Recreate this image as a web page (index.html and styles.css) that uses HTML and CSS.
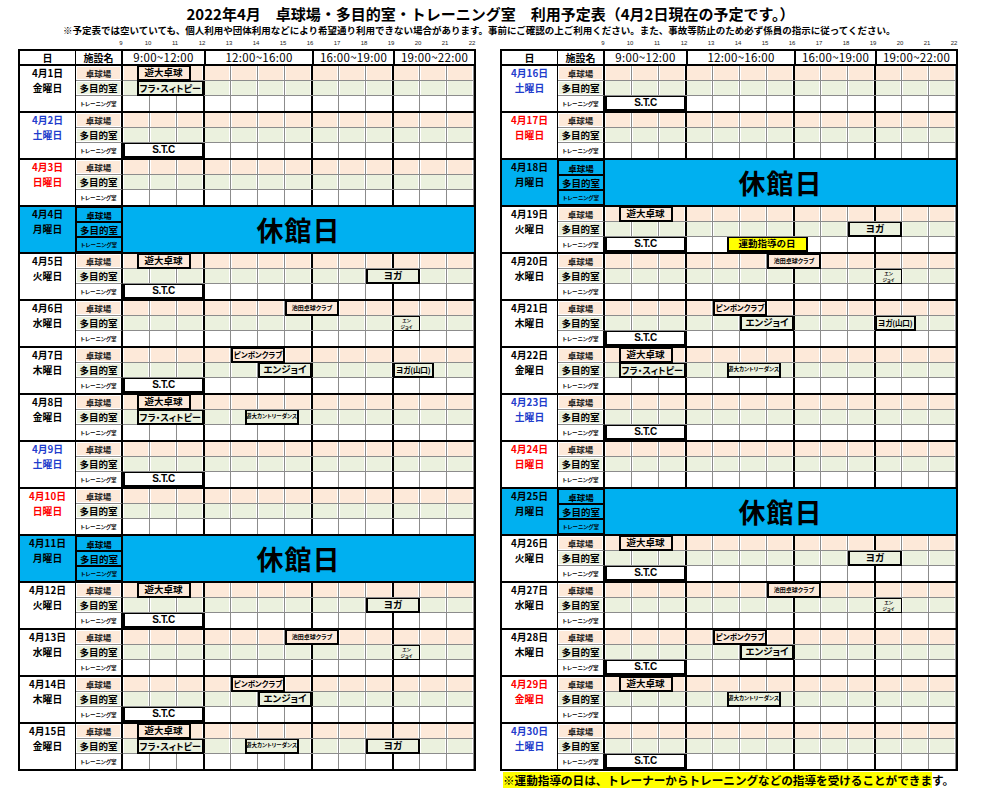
FILE: index.html
```html
<!DOCTYPE html>
<html lang="ja">
<head>
<meta charset="utf-8">
<title>2022年4月 利用予定表</title>
<link rel="stylesheet" href="styles.css">
</head>
<body>
<h1 class="title">2022年4月　卓球場・多目的室・トレーニング室　利用予定表（4月2日現在の予定です。）</h1>
<p class="subtitle">※予定表では空いていても、個人利用や団体利用などにより希望通り利用できない場合があります。事前にご確認の上ご利用ください。また、事故等防止のため必ず係員の指示に従ってください。</p>
<div class="tables">
  <div class="col">
    <div class="hours"><span>9</span><span>10</span><span>11</span><span>12</span><span>13</span><span>14</span><span>15</span><span>16</span><span>17</span><span>18</span><span>19</span><span>20</span><span>21</span><span>22</span></div>
    <div class="sched">
      <div class="head">
        <div class="h-date">日</div>
        <div class="h-fac">施設名</div>
        <div class="h-p">9:00~12:00</div>
        <div class="h-p">12:00~16:00</div>
        <div class="h-p">16:00~19:00</div>
        <div class="h-p">19:00~22:00</div>
      </div>

      <div class="day">
        <div class="date"><span>4月1日</span><span>金曜日</span></div>
        <div class="fac fac1">卓球場</div><div class="fac fac2">多目的室</div><div class="fac fac3">トレーニング室</div>
        <div class="row row1"></div><div class="row row2"></div><div class="row row3"></div>
        <div class="ev e-yudai">遊大卓球</div>
        <div class="ev e-hula">フラ・スィトピー</div>
      </div>

      <div class="day">
        <div class="date sat"><span>4月2日</span><span>土曜日</span></div>
        <div class="fac fac1">卓球場</div><div class="fac fac2">多目的室</div><div class="fac fac3">トレーニング室</div>
        <div class="row row1"></div><div class="row row2"></div><div class="row row3"></div>
        <div class="ev e-stc">S.T.C</div>
      </div>

      <div class="day">
        <div class="date sun"><span>4月3日</span><span>日曜日</span></div>
        <div class="fac fac1">卓球場</div><div class="fac fac2">多目的室</div><div class="fac fac3">トレーニング室</div>
        <div class="row row1"></div><div class="row row2"></div><div class="row row3"></div>
      </div>

      <div class="day closed">
        <div class="date"><span>4月4日</span><span>月曜日</span></div>
        <div class="fac fac1">卓球場</div><div class="fac fac2">多目的室</div><div class="fac fac3">トレーニング室</div>
        <div class="closed-label">休館日</div>
      </div>

      <div class="day">
        <div class="date"><span>4月5日</span><span>火曜日</span></div>
        <div class="fac fac1">卓球場</div><div class="fac fac2">多目的室</div><div class="fac fac3">トレーニング室</div>
        <div class="row row1"></div><div class="row row2"></div><div class="row row3"></div>
        <div class="ev e-yudai">遊大卓球</div>
        <div class="ev e-yoga">ヨガ</div>
        <div class="ev e-stc">S.T.C</div>
      </div>

      <div class="day">
        <div class="date"><span>4月6日</span><span>水曜日</span></div>
        <div class="fac fac1">卓球場</div><div class="fac fac2">多目的室</div><div class="fac fac3">トレーニング室</div>
        <div class="row row1"></div><div class="row row2"></div><div class="row row3"></div>
        <div class="ev e-ikeda">池田卓球クラブ</div>
        <div class="ev e-enjoy2"><span>エン</span><span>ジョイ</span></div>
      </div>

      <div class="day">
        <div class="date"><span>4月7日</span><span>木曜日</span></div>
        <div class="fac fac1">卓球場</div><div class="fac fac2">多目的室</div><div class="fac fac3">トレーニング室</div>
        <div class="row row1"></div><div class="row row2"></div><div class="row row3"></div>
        <div class="ev e-ping">ピンポンクラブ</div>
        <div class="ev e-enjoy">エンジョイ</div>
        <div class="ev e-yama">ヨガ(山口)</div>
        <div class="ev e-stc">S.T.C</div>
      </div>

      <div class="day">
        <div class="date"><span>4月8日</span><span>金曜日</span></div>
        <div class="fac fac1">卓球場</div><div class="fac fac2">多目的室</div><div class="fac fac3">トレーニング室</div>
        <div class="row row1"></div><div class="row row2"></div><div class="row row3"></div>
        <div class="ev e-yudai">遊大卓球</div>
        <div class="ev e-hula">フラ・スィトピー</div>
        <div class="ev e-country">遊大カントリーダンス</div>
      </div>

      <div class="day">
        <div class="date sat"><span>4月9日</span><span>土曜日</span></div>
        <div class="fac fac1">卓球場</div><div class="fac fac2">多目的室</div><div class="fac fac3">トレーニング室</div>
        <div class="row row1"></div><div class="row row2"></div><div class="row row3"></div>
        <div class="ev e-stc">S.T.C</div>
      </div>

      <div class="day">
        <div class="date sun"><span>4月10日</span><span>日曜日</span></div>
        <div class="fac fac1">卓球場</div><div class="fac fac2">多目的室</div><div class="fac fac3">トレーニング室</div>
        <div class="row row1"></div><div class="row row2"></div><div class="row row3"></div>
      </div>

      <div class="day closed">
        <div class="date"><span>4月11日</span><span>月曜日</span></div>
        <div class="fac fac1">卓球場</div><div class="fac fac2">多目的室</div><div class="fac fac3">トレーニング室</div>
        <div class="closed-label">休館日</div>
      </div>

      <div class="day">
        <div class="date"><span>4月12日</span><span>火曜日</span></div>
        <div class="fac fac1">卓球場</div><div class="fac fac2">多目的室</div><div class="fac fac3">トレーニング室</div>
        <div class="row row1"></div><div class="row row2"></div><div class="row row3"></div>
        <div class="ev e-yudai">遊大卓球</div>
        <div class="ev e-yoga">ヨガ</div>
        <div class="ev e-stc">S.T.C</div>
      </div>

      <div class="day">
        <div class="date"><span>4月13日</span><span>水曜日</span></div>
        <div class="fac fac1">卓球場</div><div class="fac fac2">多目的室</div><div class="fac fac3">トレーニング室</div>
        <div class="row row1"></div><div class="row row2"></div><div class="row row3"></div>
        <div class="ev e-ikeda">池田卓球クラブ</div>
        <div class="ev e-enjoy2"><span>エン</span><span>ジョイ</span></div>
      </div>

      <div class="day">
        <div class="date"><span>4月14日</span><span>木曜日</span></div>
        <div class="fac fac1">卓球場</div><div class="fac fac2">多目的室</div><div class="fac fac3">トレーニング室</div>
        <div class="row row1"></div><div class="row row2"></div><div class="row row3"></div>
        <div class="ev e-ping">ピンポンクラブ</div>
        <div class="ev e-enjoy">エンジョイ</div>
        <div class="ev e-stc">S.T.C</div>
      </div>

      <div class="day">
        <div class="date"><span>4月15日</span><span>金曜日</span></div>
        <div class="fac fac1">卓球場</div><div class="fac fac2">多目的室</div><div class="fac fac3">トレーニング室</div>
        <div class="row row1"></div><div class="row row2"></div><div class="row row3"></div>
        <div class="ev e-yudai">遊大卓球</div>
        <div class="ev e-hula">フラ・スィトピー</div>
        <div class="ev e-country">遊大カントリーダンス</div>
        <div class="ev e-yoga">ヨガ</div>
      </div>
    </div>
  </div>

  <div class="col col-r">
    <div class="hours"><span>9</span><span>10</span><span>11</span><span>12</span><span>13</span><span>14</span><span>15</span><span>16</span><span>17</span><span>18</span><span>19</span><span>20</span><span>21</span><span>22</span></div>
    <div class="sched">
      <div class="head">
        <div class="h-date">日</div>
        <div class="h-fac">施設名</div>
        <div class="h-p">9:00~12:00</div>
        <div class="h-p">12:00~16:00</div>
        <div class="h-p">16:00~19:00</div>
        <div class="h-p">19:00~22:00</div>
      </div>

      <div class="day">
        <div class="date sat"><span>4月16日</span><span>土曜日</span></div>
        <div class="fac fac1">卓球場</div><div class="fac fac2">多目的室</div><div class="fac fac3">トレーニング室</div>
        <div class="row row1"></div><div class="row row2"></div><div class="row row3"></div>
        <div class="ev e-stc">S.T.C</div>
      </div>

      <div class="day">
        <div class="date sun"><span>4月17日</span><span>日曜日</span></div>
        <div class="fac fac1">卓球場</div><div class="fac fac2">多目的室</div><div class="fac fac3">トレーニング室</div>
        <div class="row row1"></div><div class="row row2"></div><div class="row row3"></div>
      </div>

      <div class="day closed">
        <div class="date"><span>4月18日</span><span>月曜日</span></div>
        <div class="fac fac1">卓球場</div><div class="fac fac2">多目的室</div><div class="fac fac3">トレーニング室</div>
        <div class="closed-label">休館日</div>
      </div>

      <div class="day">
        <div class="date"><span>4月19日</span><span>火曜日</span></div>
        <div class="fac fac1">卓球場</div><div class="fac fac2">多目的室</div><div class="fac fac3">トレーニング室</div>
        <div class="row row1"></div><div class="row row2"></div><div class="row row3"></div>
        <div class="ev e-yudai">遊大卓球</div>
        <div class="ev e-yoga">ヨガ</div>
        <div class="ev e-stc">S.T.C</div>
        <div class="ev e-undo">運動指導の日</div>
      </div>

      <div class="day">
        <div class="date"><span>4月20日</span><span>水曜日</span></div>
        <div class="fac fac1">卓球場</div><div class="fac fac2">多目的室</div><div class="fac fac3">トレーニング室</div>
        <div class="row row1"></div><div class="row row2"></div><div class="row row3"></div>
        <div class="ev e-ikeda">池田卓球クラブ</div>
        <div class="ev e-enjoy2"><span>エン</span><span>ジョイ</span></div>
      </div>

      <div class="day">
        <div class="date"><span>4月21日</span><span>木曜日</span></div>
        <div class="fac fac1">卓球場</div><div class="fac fac2">多目的室</div><div class="fac fac3">トレーニング室</div>
        <div class="row row1"></div><div class="row row2"></div><div class="row row3"></div>
        <div class="ev e-ping">ピンポンクラブ</div>
        <div class="ev e-enjoy">エンジョイ</div>
        <div class="ev e-yama">ヨガ(山口)</div>
        <div class="ev e-stc">S.T.C</div>
      </div>

      <div class="day">
        <div class="date"><span>4月22日</span><span>金曜日</span></div>
        <div class="fac fac1">卓球場</div><div class="fac fac2">多目的室</div><div class="fac fac3">トレーニング室</div>
        <div class="row row1"></div><div class="row row2"></div><div class="row row3"></div>
        <div class="ev e-yudai">遊大卓球</div>
        <div class="ev e-hula">フラ・スィトピー</div>
        <div class="ev e-country">遊大カントリーダンス</div>
      </div>

      <div class="day">
        <div class="date sat"><span>4月23日</span><span>土曜日</span></div>
        <div class="fac fac1">卓球場</div><div class="fac fac2">多目的室</div><div class="fac fac3">トレーニング室</div>
        <div class="row row1"></div><div class="row row2"></div><div class="row row3"></div>
        <div class="ev e-stc">S.T.C</div>
      </div>

      <div class="day">
        <div class="date sun"><span>4月24日</span><span>日曜日</span></div>
        <div class="fac fac1">卓球場</div><div class="fac fac2">多目的室</div><div class="fac fac3">トレーニング室</div>
        <div class="row row1"></div><div class="row row2"></div><div class="row row3"></div>
      </div>

      <div class="day closed">
        <div class="date"><span>4月25日</span><span>月曜日</span></div>
        <div class="fac fac1">卓球場</div><div class="fac fac2">多目的室</div><div class="fac fac3">トレーニング室</div>
        <div class="closed-label">休館日</div>
      </div>

      <div class="day">
        <div class="date"><span>4月26日</span><span>火曜日</span></div>
        <div class="fac fac1">卓球場</div><div class="fac fac2">多目的室</div><div class="fac fac3">トレーニング室</div>
        <div class="row row1"></div><div class="row row2"></div><div class="row row3"></div>
        <div class="ev e-yudai">遊大卓球</div>
        <div class="ev e-yoga">ヨガ</div>
        <div class="ev e-stc">S.T.C</div>
      </div>

      <div class="day">
        <div class="date"><span>4月27日</span><span>水曜日</span></div>
        <div class="fac fac1">卓球場</div><div class="fac fac2">多目的室</div><div class="fac fac3">トレーニング室</div>
        <div class="row row1"></div><div class="row row2"></div><div class="row row3"></div>
        <div class="ev e-ikeda">池田卓球クラブ</div>
        <div class="ev e-enjoy2"><span>エン</span><span>ジョイ</span></div>
      </div>

      <div class="day">
        <div class="date"><span>4月28日</span><span>木曜日</span></div>
        <div class="fac fac1">卓球場</div><div class="fac fac2">多目的室</div><div class="fac fac3">トレーニング室</div>
        <div class="row row1"></div><div class="row row2"></div><div class="row row3"></div>
        <div class="ev e-ping">ピンポンクラブ</div>
        <div class="ev e-enjoy">エンジョイ</div>
        <div class="ev e-stc">S.T.C</div>
      </div>

      <div class="day">
        <div class="date sun"><span>4月29日</span><span>金曜日</span></div>
        <div class="fac fac1">卓球場</div><div class="fac fac2">多目的室</div><div class="fac fac3">トレーニング室</div>
        <div class="row row1"></div><div class="row row2"></div><div class="row row3"></div>
        <div class="ev e-yudai">遊大卓球</div>
        <div class="ev e-country">遊大カントリーダンス</div>
      </div>

      <div class="day">
        <div class="date sat"><span>4月30日</span><span>土曜日</span></div>
        <div class="fac fac1">卓球場</div><div class="fac fac2">多目的室</div><div class="fac fac3">トレーニング室</div>
        <div class="row row1"></div><div class="row row2"></div><div class="row row3"></div>
        <div class="ev e-stc">S.T.C</div>
      </div>
    </div>
    <p class="note"><span class="hl">※運動指導の日は、トレーナーからトレーニングなどの指導を受けることができま</span>す。</p>
  </div>
</div>
</body>
</html>
```

FILE: styles.css
```css
* { box-sizing: border-box; }

:root {
  --peach: #fde9d9;
  --green: #ebf1de;
  --grid: #8c8c8c;
  --periods:
    linear-gradient(#000, #000) 80px 0 / 2px 100% no-repeat,
    linear-gradient(#000, #000) 188px 0 / 2px 100% no-repeat,
    linear-gradient(#000, #000) 269px 0 / 2px 100% no-repeat;
  --tile-color: linear-gradient(to right, #fff 0 1px, transparent 1px 25px, #fff 25px 26px, var(--grid) 26px 27px) 0 0 / 27px 100% repeat-x;
  --tile-white: linear-gradient(to right, transparent 0 26px, var(--grid) 26px 27px) 0 0 / 27px 100% repeat-x;
}

body {
  margin: 0;
  width: 981px;
  height: 795px;
  overflow: hidden;
  background: #fff;
  color: #000;
  font-family: "Noto Sans CJK JP", "Noto Sans", sans-serif;
}

.title {
  margin: 5px 0 0;
  height: 18px;
  line-height: 18px;
  font-size: 15px;
  font-weight: 700;
  text-align: center;
  white-space: nowrap;
}

.subtitle {
  margin: 1px 0 0;
  padding-left: 63px;
  height: 12px;
  line-height: 12px;
  font-size: 9.5px;
  font-weight: 700;
  white-space: nowrap;
}

.tables {
  display: flex;
  gap: 24px;
  padding-left: 18px;
  margin-top: 2px;
}

.col {
  width: 458px;
}

.hours {
  display: flex;
  height: 11px;
  padding-left: 89.5px;
  font-family: "Liberation Sans", sans-serif;
  font-size: 6px;
  line-height: 11px;
  color: #222;
}

.hours span {
  flex: 0 0 27px;
  text-align: center;
}

.sched {
  border: 2px solid #000;
}

.head {
  display: grid;
  grid-template-columns: 56px 47px 81px 108px 81px 81px;
  height: 13px;
  line-height: 13px;
  text-align: center;
  white-space: nowrap;
}

.h-date {
  border-right: 1px solid #000;
  font-size: 10px;
  font-weight: 700;
}

.h-fac {
  border-right: 2px solid #000;
  font-size: 10px;
  font-weight: 700;
}

.h-p {
  font-size: 11.5px;
  letter-spacing: 0.3px;
}

.h-p + .h-p {
  border-left: 2px solid #000;
}

.day {
  display: grid;
  grid-template-columns: 56px 47px repeat(26, 13.5px);
  grid-template-rows: repeat(3, 15px);
  border-top: 2px solid #000;
}

.date {
  grid-row: 1 / 4;
  grid-column: 1;
  border-right: 1px solid #000;
  font-size: 9.8px;
  font-weight: 700;
  line-height: 15px;
  text-align: center;
}

.date span {
  display: block;
}

.date.sat { color: #1f3dcc; }
.date.sun { color: #f00; }

.fac {
  grid-column: 2;
  border-right: 2px solid #000;
  display: flex;
  align-items: center;
  justify-content: center;
  font-weight: 700;
  white-space: nowrap;
  font-feature-settings: "palt";
}

.fac1 {
  grid-row: 1;
  background: var(--peach);
  border-bottom: 1px solid var(--grid);
  box-shadow: inset 0 0 0 1px #fff;
  font-size: 8.5px;
  color: #222;
}

.fac2 {
  grid-row: 2;
  background: var(--green);
  border-bottom: 1px solid var(--grid);
  box-shadow: inset 0 0 0 1px #fff;
  font-size: 9.5px;
}

.fac3 {
  grid-row: 3;
  font-size: 5.5px;
}

.row {
  grid-column: 3 / -1;
}

.row1 {
  grid-row: 1;
  border-bottom: 1px solid var(--grid);
  background: var(--periods), var(--tile-color), var(--peach);
}

.row2 {
  grid-row: 2;
  border-bottom: 1px solid var(--grid);
  background: var(--periods), var(--tile-color), var(--green);
}

.row3 {
  grid-row: 3;
  background: var(--periods), var(--tile-white), #fff;
}

/* closed days */
.day.closed {
  background: #00b0f0;
}

.closed .fac {
  background: transparent;
  box-shadow: none;
  border: 1px solid #000;
  border-right-width: 2px;
  color: #000;
}

.closed-label {
  grid-row: 1 / 4;
  grid-column: 3 / -1;
  display: flex;
  align-items: center;
  justify-content: center;
  font-size: 27px;
  font-weight: 700;
  letter-spacing: 1px;
}

/* events */
.ev {
  display: flex;
  align-items: center;
  justify-content: center;
  border: 2px solid #000;
  border-top-width: 1px;
  font-size: 9.5px;
  font-weight: 700;
  line-height: 1;
  white-space: nowrap;
  overflow: hidden;
  font-feature-settings: "palt";
}

.e-yudai   { grid-row: 1; grid-column: 4 / 8;   background: var(--peach); }
.e-hula    { grid-row: 2; grid-column: 4 / 9;   background: var(--green); font-size: 9px; }
.e-stc     { grid-row: 3; grid-column: 3 / 9;   background: #fff; font-family: "Liberation Sans", sans-serif; font-size: 10px; letter-spacing: -0.4px; }
.e-yoga    { grid-row: 2; grid-column: 21 / 25; background: var(--green); }
.e-ikeda   { grid-row: 1; grid-column: 15 / 19; background: var(--peach); font-size: 6px; }
.e-enjoy2  {
  grid-row: 2; grid-column: 23 / 25; background: var(--green);
  flex-direction: column;
  border-width: 1px;
  font-size: 4.5px;
  line-height: 6.5px;
  text-align: center;
}
.e-enjoy2 span { display: block; }
.e-ping    { grid-row: 1; grid-column: 11 / 15; background: var(--peach); font-size: 7.5px; }
.e-enjoy   { grid-row: 2; grid-column: 13 / 17; background: var(--green); }
.e-yama    { grid-row: 2; grid-column: 23 / 26; background: var(--green); font-size: 7.6px; letter-spacing: -0.2px; }
.e-country { grid-row: 2; grid-column: 12 / 16; background: var(--green); font-size: 5.5px; }
.e-undo    { grid-row: 3; grid-column: 12 / 18; background: #ffff00; font-size: 9.5px; }

.note {
  margin: 1px 0 0;
  padding-left: 3px;
  font-size: 11.6px;
  font-weight: 700;
  line-height: 16px;
  white-space: nowrap;
}

.hl {
  background: #ffff00;
}
```
